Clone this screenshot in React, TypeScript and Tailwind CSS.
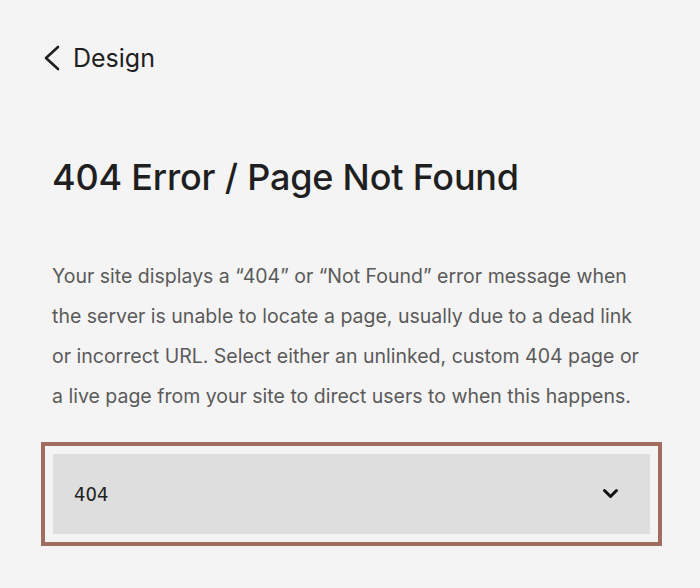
export default function App() {
  return (
    <div className="min-h-[588px] w-[700px] bg-[#f4f4f4] text-[#1f1f1f]" style={{ fontFamily: 'Inter, "Liberation Sans", sans-serif' }}>
      <div className="flex items-center gap-[10px] pl-[42px] pt-[42px]">
        <svg width="21" height="28" viewBox="0 0 21 28" fill="none" stroke="#1f1f1f" strokeWidth="2.6" strokeLinecap="round" strokeLinejoin="round">
          <path d="M16 3 L4 14 L16 25" />
        </svg>
        <span className="text-[25px] leading-[32px]">Design</span>
      </div>

      <h1 className="mt-[83px] pl-[52px] text-[36px] font-medium leading-[40px] tracking-[-0.2px]">
        404 Error / Page Not Found
      </h1>

      <p className="ml-[52px] mt-[59px] w-[598px] text-[19.5px] leading-[40px] text-[#5a5a5a]">
        Your site displays a “404” or “Not Found” error message when the server is unable to locate a page, usually due to a dead link or incorrect URL. Select either an unlinked, custom 404 page or a live page from your site to direct users to when this happens.
      </p>

      <div className="ml-[41px] mt-[26px] w-[621px] border-[4px] border-[#a06e5e] p-[8px]">
        <div className="flex h-[80px] items-center justify-between bg-[#dedede] pl-[21px] pr-[31px]">
          <span className="text-[20px] text-[#222]" style={{ fontFamily: '"DejaVu Sans Condensed", "Liberation Sans Narrow", sans-serif' }}>404</span>
          <svg width="17" height="12" viewBox="0 0 17 12" fill="none" stroke="#111" strokeWidth="3" strokeLinecap="round" strokeLinejoin="round">
            <path d="M2.5 2.5 L8.5 8.5 L14.5 2.5" />
          </svg>
        </div>
      </div>
    </div>
  );
}
